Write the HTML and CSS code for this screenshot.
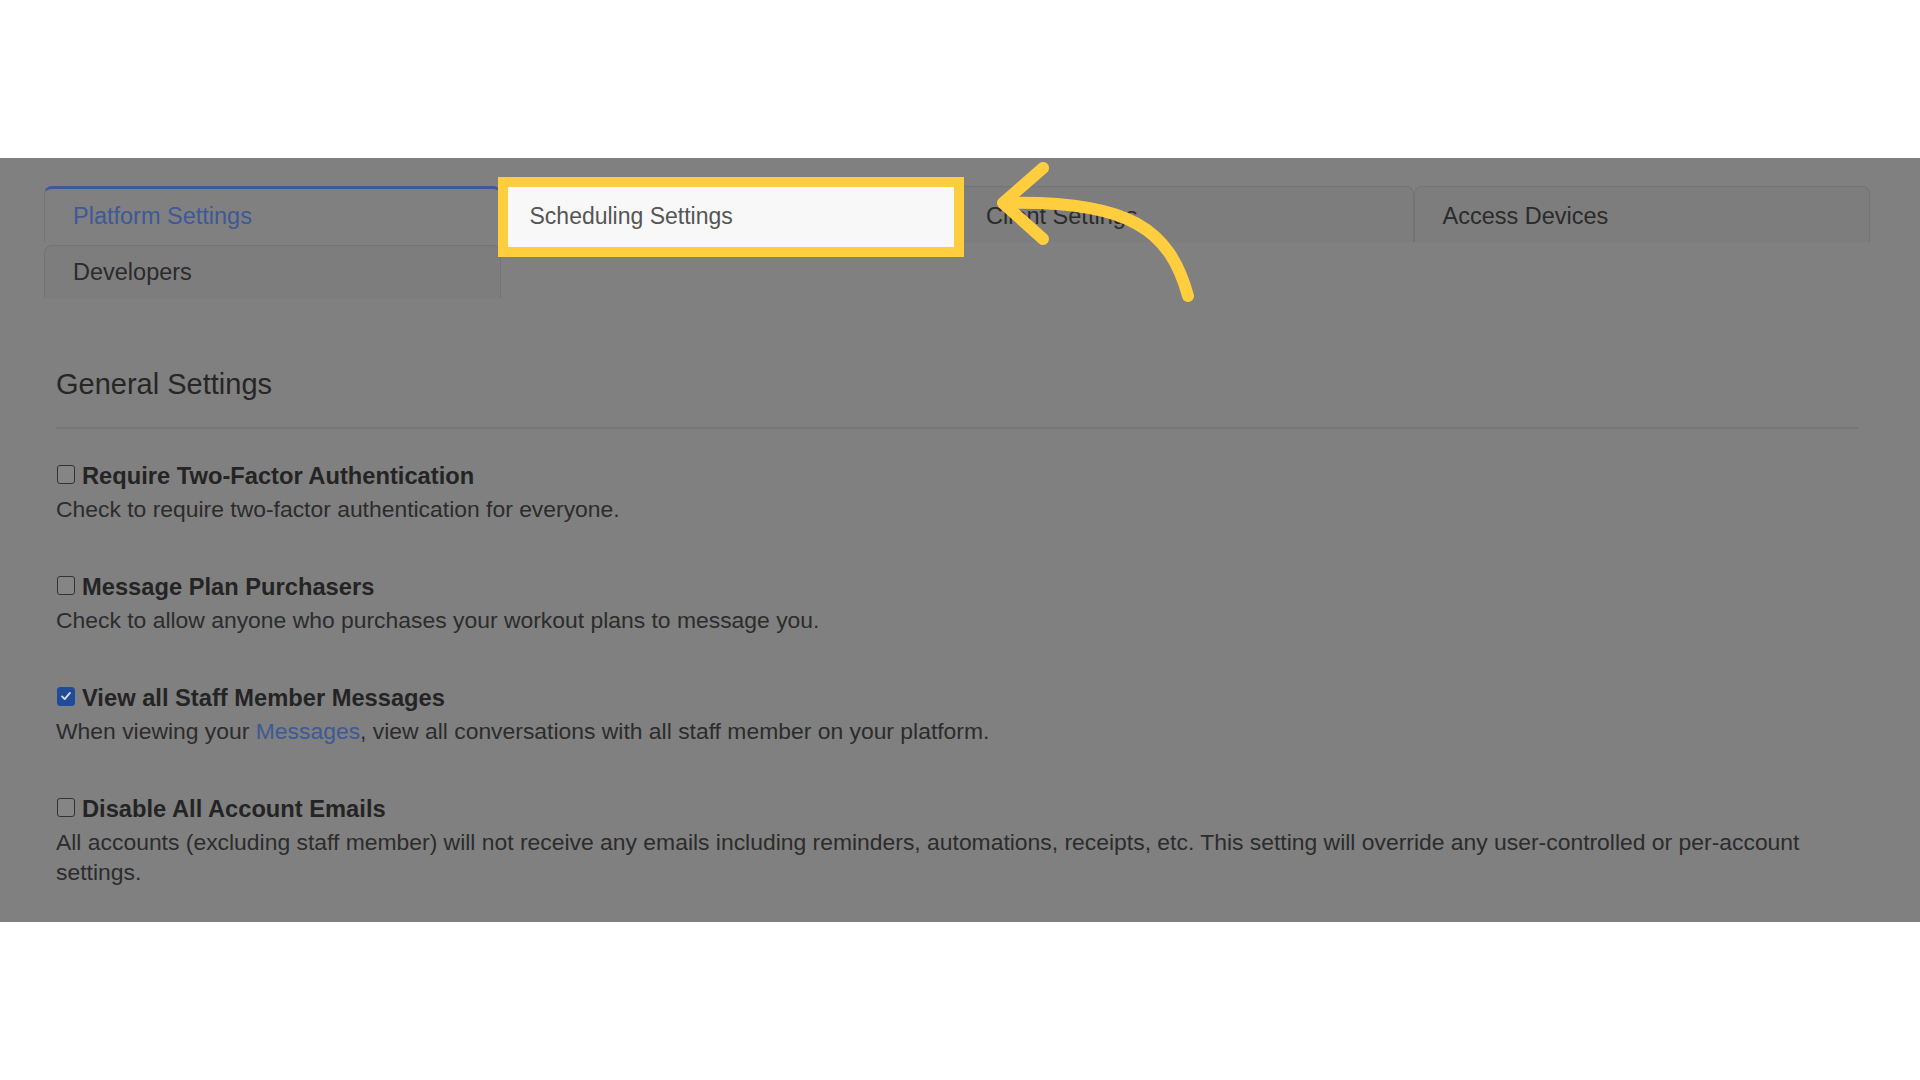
FILE: index.html
```html
<!DOCTYPE html>
<html lang="en">
<head>
  <meta charset="UTF-8">
  <title>Platform Settings</title>
  <link rel="stylesheet" href="styles.css">
</head>
<body>

  <div class="screen">
    <ul class="tabs">
      <li class="tab active">Platform Settings</li>
      <li class="tab spotlight">Scheduling Settings</li>
      <li class="tab">Client Settings</li>
      <li class="tab">Access Devices</li>
      <li class="tab short">Developers</li>
    </ul>

    <div class="panel">
      <h3>General Settings</h3>
      <hr>

      <div class="setting">
        <div class="label"><span class="box"></span>Require Two-Factor Authentication</div>
        <p>Check to require two-factor authentication for everyone.</p>
      </div>

      <div class="setting">
        <div class="label"><span class="box"></span>Message Plan Purchasers</div>
        <p>Check to allow anyone who purchases your workout plans to message you.</p>
      </div>

      <div class="setting">
        <div class="label">
          <span class="box checked">
            <svg viewBox="0 0 16 16" width="14" height="14"><path d="M3.5 8.5l3 3 6-7" fill="none" stroke="#d9d9d9" stroke-width="2.2" stroke-linecap="round" stroke-linejoin="round"/></svg>
          </span>View all Staff Member Messages
        </div>
        <p>When viewing your <a href="#">Messages</a>, view all conversations with all staff member on your platform.</p>
      </div>

      <div class="setting">
        <div class="label"><span class="box"></span>Disable All Account Emails</div>
        <p>All accounts (excluding staff member) will not receive any emails including reminders, automations, receipts, etc. This setting will override any user-controlled or per-account settings.</p>
      </div>
    </div>

    <!-- annotation arrow pointing at the highlighted tab -->
    <svg class="arrow" width="230" height="160" viewBox="0 0 230 160">
      <path d="M208 138 C190 72 150 42 25 45" fill="none" stroke="#ffce3f" stroke-width="12" stroke-linecap="round"/>
      <path d="M63 10 L23 45 L63 81" fill="none" stroke="#ffce3f" stroke-width="12" stroke-linecap="round" stroke-linejoin="round"/>
    </svg>
  </div>

</body>
</html>
```

FILE: styles.css
```css
body {
  margin: 0;
  background-color: #fff;
  font-family: "Liberation Sans", Arial, sans-serif;
  color: #2a2a2a;
}

.screen {
  position: relative;
  margin-top: 158px;
  height: 764px;
  box-sizing: border-box;
  padding: 28px 50px 0 44px;
  background-color: #808080;
}

.tabs {
  list-style: none;
  margin: 0;
  padding: 0;
  display: grid;
  grid-template-columns: repeat(4, 1fr);
  row-gap: 3px;
}

.tab {
  height: 56px;
  box-sizing: border-box;
  padding: 3px 28px 0;
  display: flex;
  align-items: center;
  font-size: 23.5px;
  color: #2b2b2b;
  background-color: #7d7d7d;
  border: 1px solid #747474;
  border-bottom: none;
  border-radius: 8px 8px 0 0;
}

.tab.active {
  color: #3f5896;
  background-color: #808080;
  border-top: 3px solid #3f5896;
  padding-top: 2px;
}

.tab.short {
  height: 53px;
  padding-top: 0;
}

/* highlighted tab, drawn above the dimmed page */
.tab.spotlight {
  position: relative;
  z-index: 1;
  height: 60px;
  margin: 1px 3px -5px 7px;
  padding: 0 0 1px 22px;
  font-size: 23px;
  color: #555;
  background-color: #f8f8f8;
  border: none;
  border-radius: 0;
  outline: 10px solid #ffce3f;
}

.panel {
  padding: 0 12px;
}

h3 {
  margin: 69px 0 0;
  font-size: 29px;
  font-weight: normal;
  line-height: 35px;
  color: #262626;
}

hr {
  margin: 25px 0 32px;
  border: none;
  height: 2px;
  background-color: #777;
}

.setting {
  margin-bottom: 48px;
}

.label {
  display: flex;
  align-items: center;
  font-size: 23.7px;
  font-weight: bold;
  line-height: 30px;
  color: #242424;
}

.box {
  width: 16px;
  height: 17px;
  margin: -4px 7px 0 1px;
  border: 1.5px solid #333;
  border-radius: 3px;
  background-color: #858585;
  display: flex;
  align-items: center;
  justify-content: center;
}

.box.checked {
  background-color: #1f4c9a;
  border-color: #1f4c9a;
}

.setting p {
  margin: 3px 0 0;
  font-size: 22.9px;
  line-height: 30px;
  color: #2c2c2c;
  max-width: 1760px;
}

.setting a {
  color: #3f5896;
  text-decoration: none;
}

.arrow {
  position: absolute;
  left: 980px;
  top: 0;
  z-index: 2;
}
```
